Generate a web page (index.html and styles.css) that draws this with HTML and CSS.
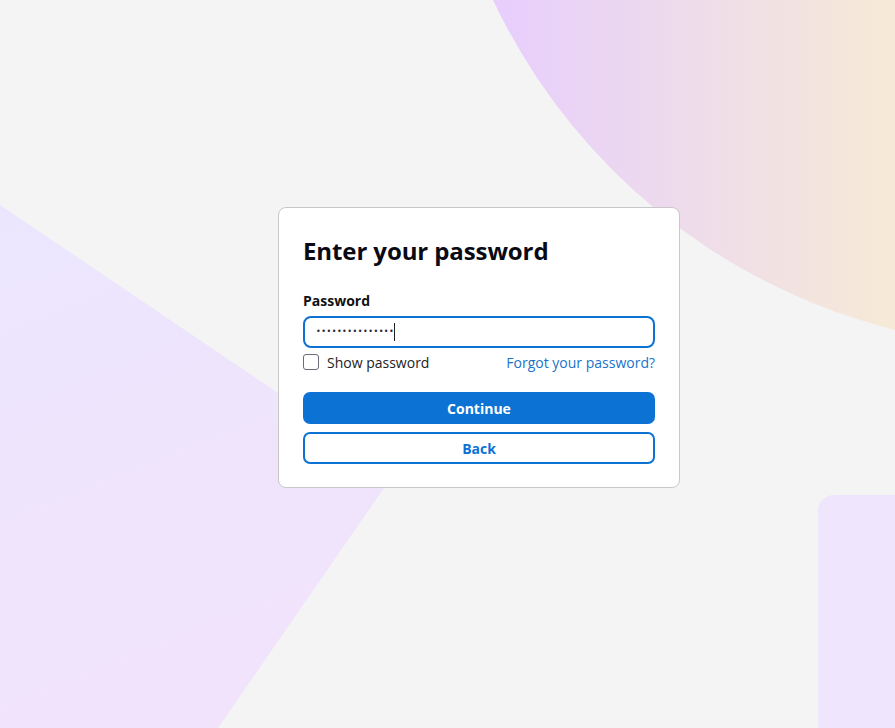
FILE: index.html
```html
<!DOCTYPE html>
<html lang="en">
<head>
<meta charset="utf-8">
<title>Enter your password</title>
<link rel="stylesheet" href="styles.css">
</head>
<body>
<div class="bg">
  <svg class="bg-art" width="895" height="728" viewBox="0 0 895 728" aria-hidden="true">
    <defs>
      <linearGradient id="gCircle" x1="495" y1="0" x2="895" y2="0" gradientUnits="userSpaceOnUse">
        <stop offset="0" stop-color="#e7cefd"/>
        <stop offset="0.4" stop-color="#edd9ee"/>
        <stop offset="1" stop-color="#f6ead6"/>
      </linearGradient>
      <linearGradient id="gPoly" x1="0" y1="0" x2="0.3" y2="1">
        <stop offset="0" stop-color="#ebe6fe"/>
        <stop offset="1" stop-color="#f1e3fb"/>
      </linearGradient>
    </defs>
    <circle cx="1042" cy="-259" r="607" fill="url(#gCircle)"/>
    <polygon points="0,205 395,472 218,728 0,728" fill="url(#gPoly)"/>
    <rect x="818" y="495" width="120" height="300" rx="16" fill="#efe5fd"/>
  </svg>
</div>
<main class="page">
  <form class="card" onsubmit="return false">
    <h1 class="title">Enter your password</h1>
    <label class="label" for="pw">Password</label>
    <div class="field" id="pw">
      <span class="dots">•••••••••••••••</span><span class="caret"></span>
    </div>
    <div class="row">
      <label class="check"><span class="box"></span><span>Show password</span></label>
      <a class="link" href="#">Forgot your password?</a>
    </div>
    <button class="btn primary" type="submit">Continue</button>
    <button class="btn secondary" type="button">Back</button>
  </form>
</main>
</body>
</html>
```

FILE: styles.css
```css
* { box-sizing: border-box; }
html, body { margin: 0; padding: 0; }
body {
  width: 895px;
  height: 728px;
  overflow: hidden;
  background: #f4f4f4;
  font-family: "Open Sans", "Noto Sans", sans-serif;
  color: #111;
  position: relative;
}
.bg { position: absolute; inset: 0; }
.bg-art { display: block; }
.page {
  position: relative;
  height: 728px;
  display: flex;
  justify-content: flex-start;
  align-items: flex-start;
  padding-top: 207px;
  padding-left: 278px;
}
.card {
  width: 402px;
  background: #fff;
  border: 1px solid #c8c8c8;
  border-radius: 8px;
  padding: 24px 24px 23px 24px;
  display: flex;
  flex-direction: column;
}
.title {
  margin: 3px 0 0;
  font-size: 24px;
  font-weight: 700;
  line-height: 32px;
  color: #0a0a14;
  letter-spacing: -0.1px;
}
.label {
  margin-top: 24px;
  font-size: 14px;
  font-weight: 700;
  line-height: 20px;
  color: #111;
}
.field {
  margin-top: 5px;
  height: 32px;
  border: 2px solid #0c72d4;
  border-radius: 8px;
  display: flex;
  align-items: center;
  padding-left: 11px;
  background: #fff;
}
.dots {
  font-family: "DejaVu Sans", sans-serif;
  font-size: 8px;
  letter-spacing: 0.5px;
  color: #2a2a3a;
  line-height: 1;
}
.caret {
  width: 1px;
  height: 18px;
  background: #222;
  margin-left: 0;
}
.row {
  margin-top: 4px;
  display: flex;
  justify-content: space-between;
  align-items: center;
  height: 20px;
}
.check {
  display: flex;
  align-items: center;
  gap: 8px;
  font-size: 14px;
  color: #222;
}
.box {
  width: 16px;
  height: 16px;
  border: 1px solid #6b6b7b;
  border-radius: 3px;
  background: #fff;
}
.link {
  font-size: 14px;
  color: #1a73c9;
  text-decoration: none;
}
.btn {
  height: 32px;
  border-radius: 7px;
  font-family: "Open Sans", "Noto Sans", sans-serif;
  font-size: 14px;
  font-weight: 700;
  cursor: pointer;
}
.primary {
  margin-top: 20px;
  background: #0c72d4;
  border: none;
  color: #fff;
}
.secondary {
  margin-top: 8px;
  background: #fff;
  border: 2px solid #0c72d4;
  color: #0c72d4;
}
```
